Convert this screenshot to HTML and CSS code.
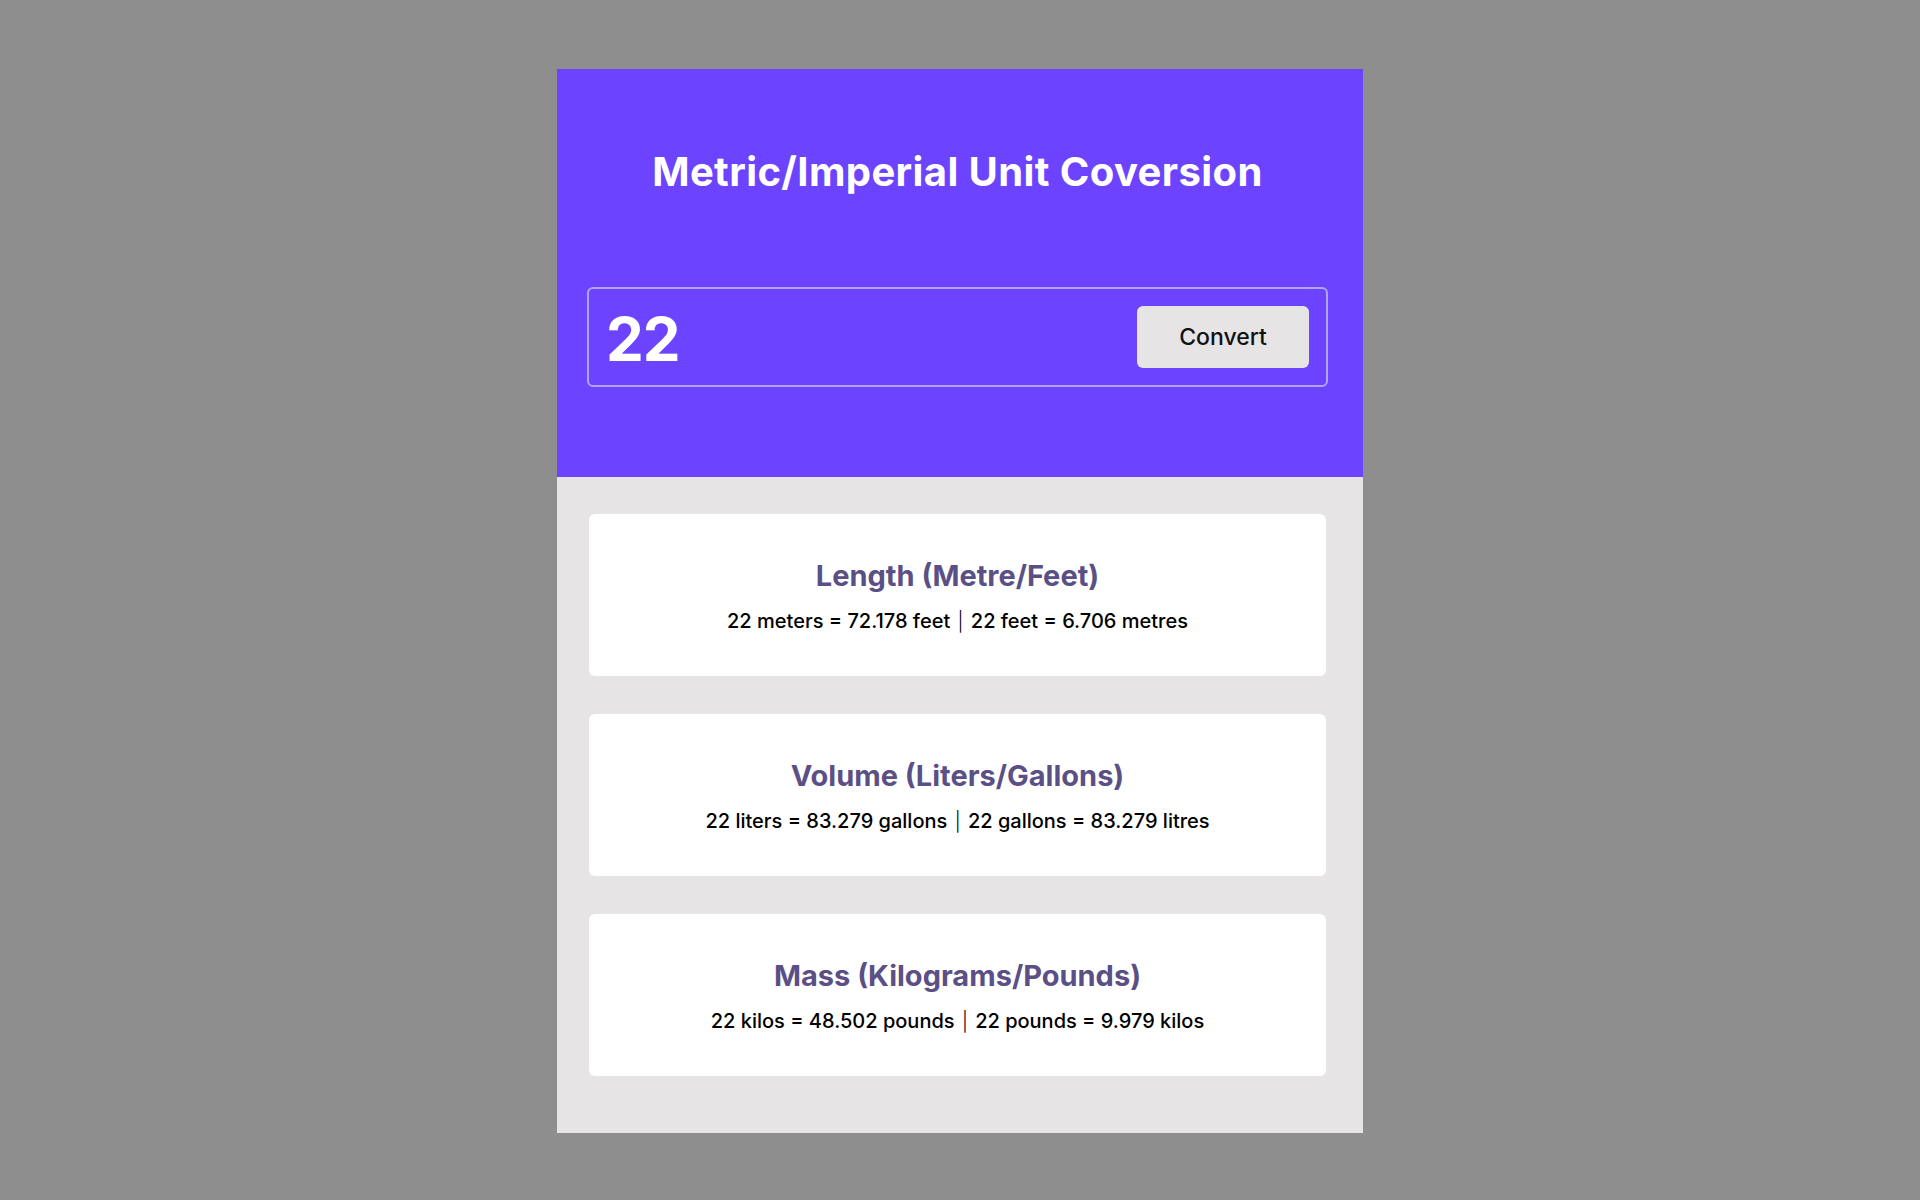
FILE: index.html
```html
<!DOCTYPE html>
<html lang="en">
<head>
<meta charset="utf-8">
<title>Metric/Imperial Unit Coversion</title>
<link rel="stylesheet" href="styles.css">
</head>
<body>
<main class="app">
  <header class="hero">
    <h1 class="hero-title">Metric/Imperial Unit Coversion</h1>
    <div class="input-box">
      <span class="input-value">22</span>
      <button class="convert-btn" type="button">Convert</button>
    </div>
  </header>
  <section class="results">
    <div class="result-card">
      <h2 class="result-title">Length (Metre/Feet)</h2>
      <p class="result-text">22 meters = 72.178 feet <span class="sep">|</span> 22 feet = 6.706 metres</p>
    </div>
    <div class="result-card">
      <h2 class="result-title">Volume (Liters/Gallons)</h2>
      <p class="result-text">22 liters = 83.279 gallons <span class="sep">|</span> 22 gallons = 83.279 litres</p>
    </div>
    <div class="result-card">
      <h2 class="result-title">Mass (Kilograms/Pounds)</h2>
      <p class="result-text">22 kilos = 48.502 pounds <span class="sep">|</span> 22 pounds = 9.979 kilos</p>
    </div>
  </section>
</main>
</body>
</html>
```

FILE: styles.css
```css
* { box-sizing: border-box; }
html, body { margin: 0; padding: 0; }
body {
  background: #8e8e8e;
  font-family: Inter, "Noto Sans", sans-serif;
  min-height: 1200px;
}
.app {
  width: 806px;
  margin: 69px auto 0;
}
.hero {
  background: #6c44ff;
  padding: 80px 35px 90px 30px;
  height: 408px;
}
.hero-title {
  margin: 0 0 92px;
  color: #fff;
  font-size: 40px;
  line-height: 46px;
  font-weight: 700;
  letter-spacing: 0.4px;
  text-align: center;
}
.input-box {
  height: 100px;
  border: 2px solid #b1a3ff;
  border-radius: 6px;
  display: flex;
  align-items: center;
  justify-content: space-between;
  padding: 0 17px 0 17px;
}
.input-value {
  color: #fff;
  font-size: 60px;
  font-weight: 700;
  letter-spacing: -1px;
  line-height: 1;
  margin-top: 4px;
}
.convert-btn {
  width: 172px;
  height: 62px;
  border: none;
  border-radius: 6px;
  background: #e6e4e5;
  color: #111;
  font-family: Inter, "Noto Sans", sans-serif;
  font-size: 23px;
  font-weight: 500;
  letter-spacing: 0;
}
.results {
  background: #e6e4e5;
  padding: 37px 37px 57px 32px;
  display: flex;
  flex-direction: column;
  gap: 38px;
}
.result-card {
  background: #fff;
  border-radius: 6px;
  height: 162px;
  padding: 46px 16px 0;
  text-align: center;
}
.result-title {
  margin: 0 0 17px;
  color: #5b5085;
  font-size: 29px;
  line-height: 32px;
  font-weight: 700;
  letter-spacing: 0;
}
.result-text {
  margin: 0;
  color: #000;
  font-size: 20px;
  line-height: 24px;
  font-weight: 500;
  letter-spacing: 0;
}
.sep {
  margin: 0 2px;
  font-weight: 300;
  font-size: 19px;
}
```
